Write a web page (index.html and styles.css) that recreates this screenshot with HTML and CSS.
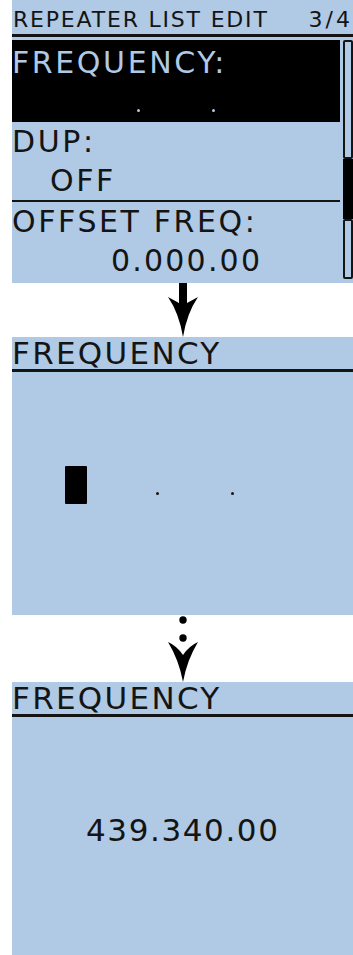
FILE: index.html
```html
<!DOCTYPE html>
<html lang="en">
<head>
    <meta charset="UTF-8">
    <meta name="viewport" content="width=device-width, initial-scale=1.0">
    <title>Repeater list edit - frequency</title>
    <link rel="stylesheet" href="styles.css">
</head>
<body>
    <div class="steps">
        <div class="lcd lcd-menu">
            <div class="menu-title">
                <span>REPEATER LIST EDIT</span>
                <span class="page">3/4</span>
            </div>
            <div class="menu-body">
                <ul class="menu-list">
                    <li class="item selected">
                        <div class="line">FREQUENCY:</div>
                        <div class="field">
                            <span class="cell"></span><span class="cell"></span><span class="cell"></span><span class="cell"></span>
                            <span class="pt"></span>
                            <span class="cell"></span><span class="cell"></span><span class="cell"></span>
                            <span class="pt"></span>
                            <span class="cell"></span><span class="cell"></span>
                        </div>
                    </li>
                    <li class="item divided">
                        <div class="line">DUP:</div>
                        <div class="line indent">OFF</div>
                    </li>
                    <li class="item">
                        <div class="line">OFFSET FREQ:</div>
                        <div class="line value">0.000.00</div>
                    </li>
                </ul>
                <div class="scrollbar">
                    <div class="track top"></div>
                    <div class="thumb"></div>
                    <div class="track bottom"></div>
                </div>
            </div>
        </div>

        <div class="arrow">
            <svg width="30" height="54" viewBox="0 0 30 54">
                <path d="M11 0H19V20L30 14Q19 30 15 54Q11 30 0 14L11 20Z" fill="#000"/>
            </svg>
        </div>

        <div class="lcd lcd-edit">
            <div class="edit-title">FREQUENCY</div>
            <div class="edit-body">
                <div class="field entry">
                    <span class="cell cursor"></span><span class="cell"></span><span class="cell"></span><span class="cell"></span>
                    <span class="pt"></span>
                    <span class="cell"></span><span class="cell"></span><span class="cell"></span>
                    <span class="pt"></span>
                    <span class="cell"></span><span class="cell"></span>
                </div>
            </div>
        </div>

        <div class="arrow more">
            <svg width="30" height="67" viewBox="0 0 30 67">
                <circle cx="15" cy="5" r="3.7" fill="#000"/>
                <circle cx="15" cy="23" r="3.7" fill="#000"/>
                <path d="M0 27Q9 31 15 40Q21 31 30 27Q19 45 15 67Q11 45 0 27Z" fill="#000"/>
            </svg>
        </div>

        <div class="lcd lcd-edit last">
            <div class="edit-title">FREQUENCY</div>
            <div class="edit-body">
                <div class="result">439.340.00</div>
            </div>
        </div>
    </div>
</body>
</html>
```

FILE: styles.css
```css
body {
    margin: 0;
    background: #fff;
    font-family: "DejaVu Sans", sans-serif;
    color: #141414;
}
.steps {
    display: flex;
    flex-direction: column;
    padding-left: 12px;
}
.lcd {
    background: #b0c9e4;
    white-space: nowrap;
}

/* menu screen */
.lcd-menu {
    height: 283px;
}
.menu-title {
    display: flex;
    justify-content: space-between;
    height: 37px;
    padding: 3px 0 0 1px;
    box-sizing: border-box;
    line-height: 34px;
    font-size: 22px;
    letter-spacing: 1.8px;
    border-bottom: 3px solid #141414;
}
.menu-title .page {
    letter-spacing: 3px;
}
.menu-body {
    display: flex;
    gap: 3px;
    padding-top: 4px;
    height: 243px;
    box-sizing: border-box;
}
.menu-list {
    flex: 1;
    list-style: none;
    margin: 0;
    padding: 0;
}
.item {
    font-size: 30px;
    letter-spacing: 2.6px;
}
.item .line {
    height: 39px;
    line-height: 39px;
}
.item.selected {
    background: #000;
    color: #b0c9e4;
    padding: 3px 0 1px;
    margin-top: -1px;
}
.item.divided {
    border-bottom: 2px solid #141414;
}
.indent {
    padding-left: 38px;
}
.value {
    padding-left: 99px;
    letter-spacing: 2.2px;
}

.scrollbar {
    width: 10px;
    display: flex;
    flex-direction: column;
    margin-top: -1px;
    padding-bottom: 1px;
}
.track {
    border: 2px solid #141414;
    border-radius: 2px;
    background: #b0c9e4;
}
.track.top {
    flex: 1;
}
.track.bottom {
    height: 56px;
}
.thumb {
    height: 60px;
    background: #000;
}

/* digit entry field */
.field {
    display: flex;
    height: 39px;
    padding-left: 34px;
}
.cell {
    width: 22px;
    flex-shrink: 0;
}
.pt {
    width: 9px;
    flex-shrink: 0;
    display: flex;
    justify-content: center;
    align-items: flex-end;
    padding-bottom: 9px;
    box-sizing: border-box;
}
.pt::after {
    content: "";
    width: 3px;
    height: 3px;
    border-radius: 50%;
    background: currentColor;
}
.field.entry {
    height: 38px;
    padding-left: 53px;
    padding-top: 94px;
}
.cursor {
    background: #000;
    border-radius: 1px;
}

.arrow {
    display: flex;
    justify-content: center;
    height: 54px;
}
.arrow.more {
    height: 67px;
}
.arrow svg {
    display: block;
    overflow: visible;
}

/* edit screens */
.lcd-edit {
    height: 278px;
}
.lcd-edit.last {
    height: 273px;
}
.edit-title {
    height: 32px;
    line-height: 32px;
    font-size: 31px;
    letter-spacing: 2.3px;
    border-bottom: 3px solid #141414;
}
.result {
    padding-top: 95px;
    padding-left: 74px;
    line-height: 36px;
    font-size: 31px;
    letter-spacing: 1.6px;
}
```
